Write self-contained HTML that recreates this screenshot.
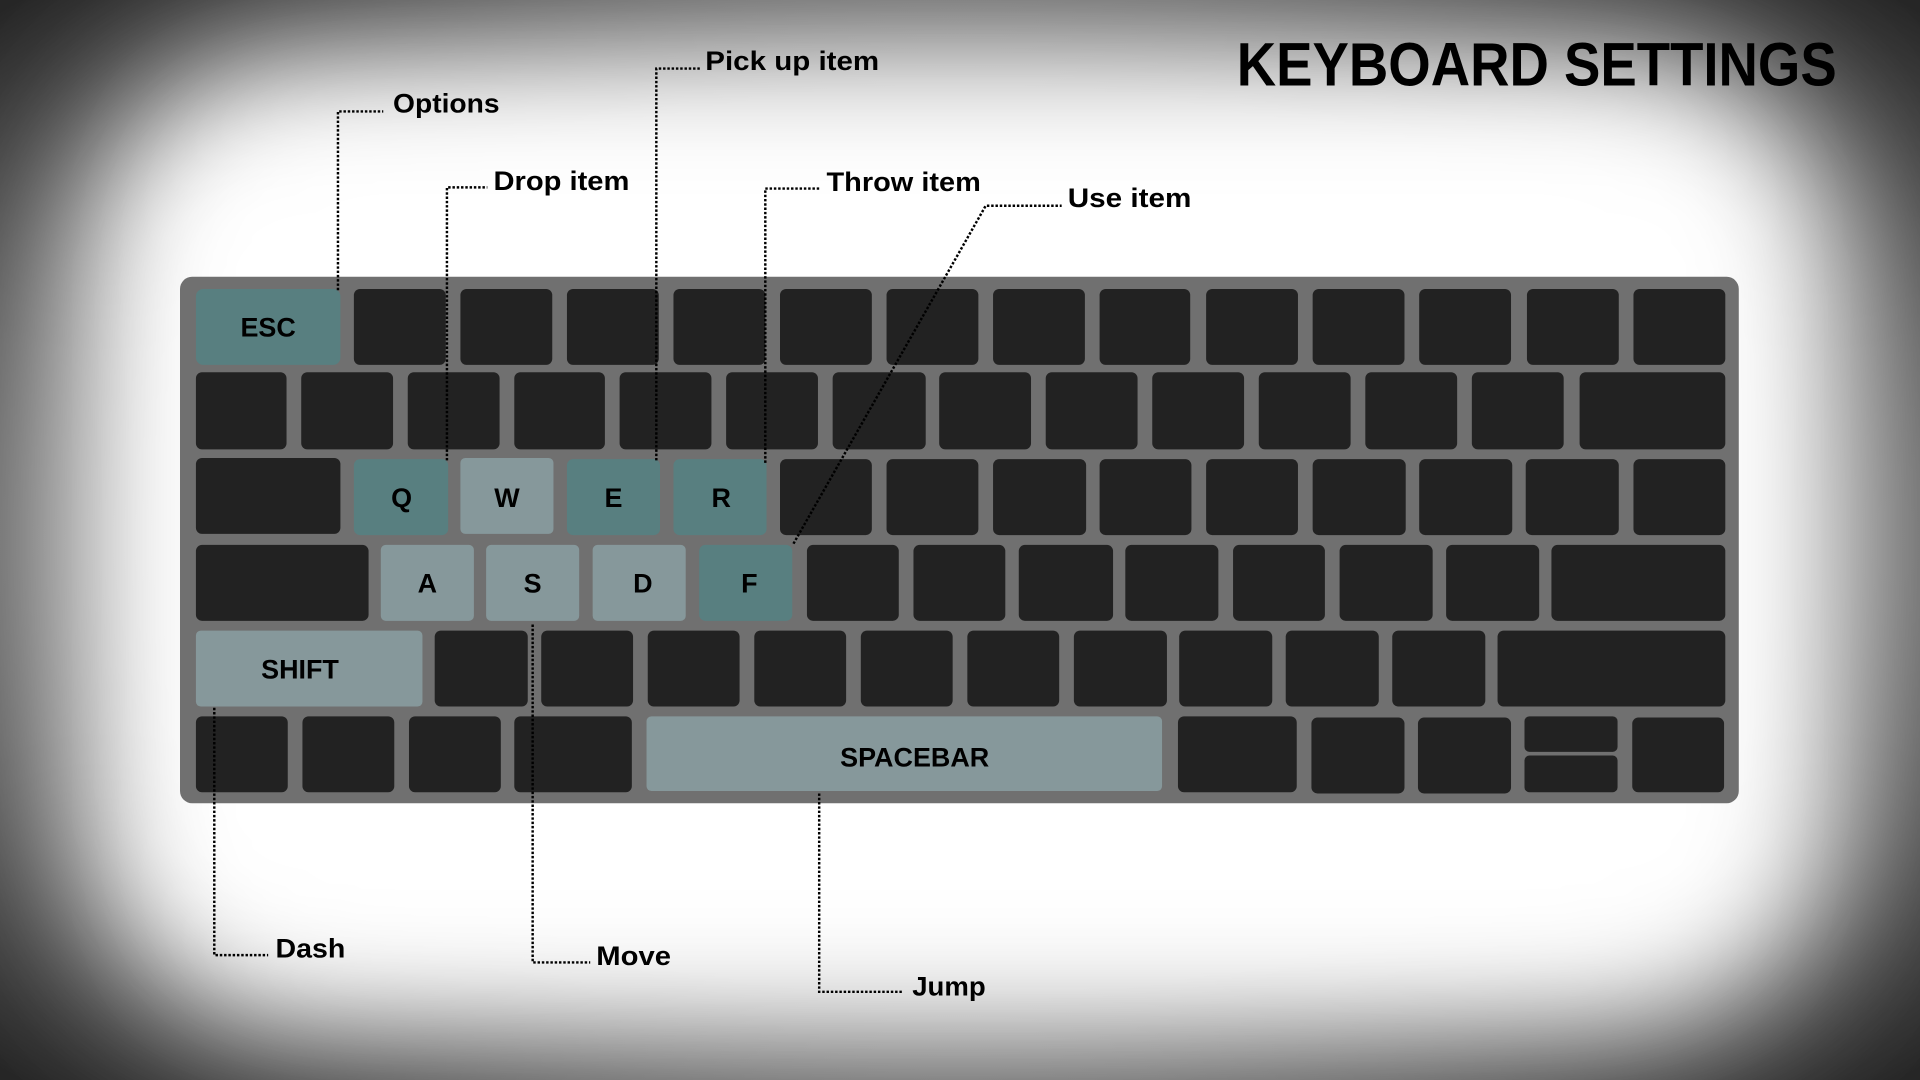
<!DOCTYPE html>
<html><head><meta charset="utf-8"><style>
html,body{margin:0;padding:0;width:1920px;height:1080px;overflow:hidden;background:#444}
svg{display:block}
text{font-family:"Liberation Sans",sans-serif;font-weight:bold;fill:#000}
</style></head><body>
<svg width="1920" height="1080" viewBox="0 0 1568 882" preserveAspectRatio="none" xmlns="http://www.w3.org/2000/svg">
<defs>
<filter id="b" x="-30%" y="-30%" width="160%" height="160%"><feGaussianBlur stdDeviation="55"/></filter>
<radialGradient id="rg" cx="50%" cy="50%" r="70%"><stop offset="0.6" stop-color="#8a8a8a"/><stop offset="1" stop-color="#262626"/></radialGradient>
</defs>
<rect width="1568" height="882" fill="url(#rg)"/>
<rect x="70" y="55" width="1430" height="775" rx="160" fill="#fff" filter="url(#b)"/>
<rect x="180" y="120" width="1210" height="650" rx="80" fill="#fff" filter="url(#b)"/>

<text x="1010" y="70" font-size="50" textLength="490" lengthAdjust="spacingAndGlyphs">KEYBOARD SETTINGS</text>

<rect x="147" y="226" width="1273" height="430" rx="10" fill="#707070"/>
<g fill="#222">
<rect x="289" y="236" width="75" height="62" rx="5"/><rect x="376" y="236" width="75" height="62" rx="5"/><rect x="463" y="236" width="75" height="62" rx="5"/><rect x="550" y="236" width="75" height="62" rx="5"/><rect x="637" y="236" width="75" height="62" rx="5"/><rect x="724" y="236" width="75" height="62" rx="5"/><rect x="811" y="236" width="75" height="62" rx="5"/><rect x="898" y="236" width="74" height="62" rx="5"/><rect x="985" y="236" width="75" height="62" rx="5"/><rect x="1072" y="236" width="75" height="62" rx="5"/><rect x="1159" y="236" width="75" height="62" rx="5"/><rect x="1247" y="236" width="75" height="62" rx="5"/><rect x="1334" y="236" width="75" height="62" rx="5"/>
<rect x="160" y="304" width="74" height="63" rx="5"/><rect x="246" y="304" width="75" height="63" rx="5"/><rect x="333" y="304" width="75" height="63" rx="5"/><rect x="420" y="304" width="74" height="63" rx="5"/><rect x="506" y="304" width="75" height="63" rx="5"/><rect x="593" y="304" width="75" height="63" rx="5"/><rect x="680" y="304" width="76" height="63" rx="5"/><rect x="767" y="304" width="75" height="63" rx="5"/><rect x="854" y="304" width="75" height="63" rx="5"/><rect x="941" y="304" width="75" height="63" rx="5"/><rect x="1028" y="304" width="75" height="63" rx="5"/><rect x="1115" y="304" width="75" height="63" rx="5"/><rect x="1202" y="304" width="75" height="63" rx="5"/><rect x="1290" y="304" width="119" height="63" rx="5"/>
<rect x="160" y="374" width="118" height="62" rx="5"/><rect x="637" y="375" width="75" height="62" rx="5"/><rect x="724" y="375" width="75" height="62" rx="5"/><rect x="811" y="375" width="76" height="62" rx="5"/><rect x="898" y="375" width="75" height="62" rx="5"/><rect x="985" y="375" width="75" height="62" rx="5"/><rect x="1072" y="375" width="76" height="62" rx="5"/><rect x="1159" y="375" width="76" height="62" rx="5"/><rect x="1246" y="375" width="76" height="62" rx="5"/><rect x="1334" y="375" width="75" height="62" rx="5"/>
<rect x="160" y="445" width="141" height="62" rx="5"/><rect x="659" y="445" width="75" height="62" rx="5"/><rect x="746" y="445" width="75" height="62" rx="5"/><rect x="832" y="445" width="77" height="62" rx="5"/><rect x="919" y="445" width="76" height="62" rx="5"/><rect x="1007" y="445" width="75" height="62" rx="5"/><rect x="1094" y="445" width="76" height="62" rx="5"/><rect x="1181" y="445" width="76" height="62" rx="5"/><rect x="1267" y="445" width="142" height="62" rx="5"/>
<rect x="355" y="515" width="76" height="62" rx="5"/><rect x="442" y="515" width="75" height="62" rx="5"/><rect x="529" y="515" width="75" height="62" rx="5"/><rect x="616" y="515" width="75" height="62" rx="5"/><rect x="703" y="515" width="75" height="62" rx="5"/><rect x="790" y="515" width="75" height="62" rx="5"/><rect x="877" y="515" width="76" height="62" rx="5"/><rect x="963" y="515" width="76" height="62" rx="5"/><rect x="1050" y="515" width="76" height="62" rx="5"/><rect x="1137" y="515" width="76" height="62" rx="5"/><rect x="1223" y="515" width="186" height="62" rx="5"/>
<rect x="160" y="585" width="75" height="62" rx="5"/><rect x="247" y="585" width="75" height="62" rx="5"/><rect x="334" y="585" width="75" height="62" rx="5"/><rect x="420" y="585" width="96" height="62" rx="5"/><rect x="962" y="585" width="97" height="62" rx="5"/><rect x="1071" y="586" width="76" height="62" rx="5"/><rect x="1158" y="586" width="76" height="62" rx="5"/><rect x="1245" y="585" width="76" height="29" rx="4"/><rect x="1245" y="617" width="76" height="30" rx="4"/><rect x="1333" y="586" width="75" height="61" rx="5"/>
</g>
<g fill="#587f80">
<rect x="160" y="236" width="118" height="62" rx="6"/>
<rect x="289" y="375" width="77" height="62" rx="5"/><rect x="463" y="375" width="76" height="62" rx="5"/><rect x="550" y="375" width="76" height="62" rx="5"/><rect x="571" y="445" width="76" height="62" rx="5"/>
</g>
<g fill="#86989b">
<rect x="376" y="374" width="76" height="62" rx="4"/><rect x="311" y="445" width="76" height="62" rx="4"/><rect x="397" y="445" width="76" height="62" rx="4"/><rect x="484" y="445" width="76" height="62" rx="4"/>
<rect x="160" y="515" width="185" height="62" rx="4"/><rect x="528" y="585" width="421" height="61" rx="4"/>
</g>
<g font-size="22" text-anchor="middle">
<text x="219" y="275">ESC</text>
<text x="328" y="414">Q</text><text x="414" y="414">W</text><text x="501" y="414">E</text><text x="589" y="414">R</text>
<text x="349" y="484">A</text><text x="435" y="484">S</text><text x="525" y="484">D</text><text x="612" y="484">F</text>
<text x="245" y="554">SHIFT</text><text x="747" y="626">SPACEBAR</text>
</g>
<g fill="none" stroke="#000" stroke-width="2" stroke-dasharray="2 1.5">
<path d="M276 237V91H313"/>
<path d="M365 376V153H398"/>
<path d="M536 376V56H572"/>
<path d="M625 378V154H669"/>
<path d="M648 444L805 168H867"/>
<path d="M175 578V780H219"/>
<path d="M435 510V786H482"/>
<path d="M669 648V810H738"/>
</g>
<g font-size="22">
<text x="321" y="92" textLength="87" lengthAdjust="spacingAndGlyphs">Options</text>
<text x="403" y="155" textLength="111" lengthAdjust="spacingAndGlyphs">Drop item</text>
<text x="576" y="57" textLength="142" lengthAdjust="spacingAndGlyphs">Pick up item</text>
<text x="675" y="156" textLength="126" lengthAdjust="spacingAndGlyphs">Throw item</text>
<text x="872" y="169" textLength="101" lengthAdjust="spacingAndGlyphs">Use item</text>
<text x="225" y="782" textLength="57" lengthAdjust="spacingAndGlyphs">Dash</text>
<text x="487" y="788" textLength="61" lengthAdjust="spacingAndGlyphs">Move</text>
<text x="745" y="813" textLength="60" lengthAdjust="spacingAndGlyphs">Jump</text>
</g>
</svg>
</body></html>
